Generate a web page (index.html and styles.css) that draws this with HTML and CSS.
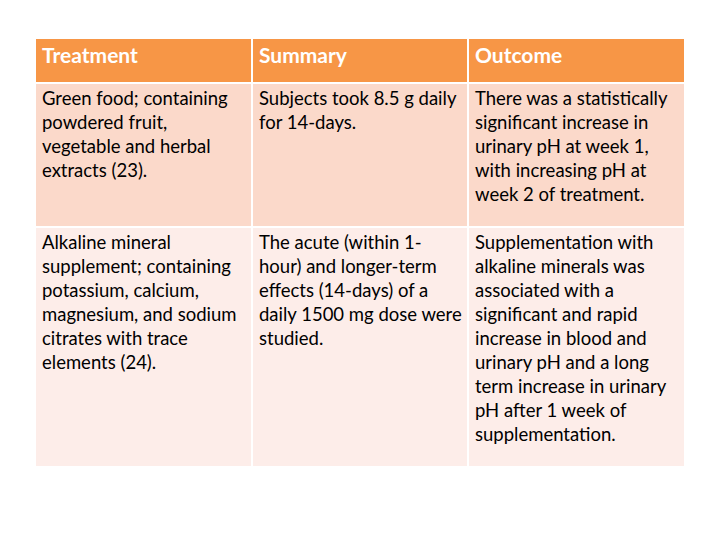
FILE: index.html
```html
<!DOCTYPE html>
<html>
<head>
<meta charset="utf-8">
<link rel="stylesheet" href="styles.css">
</head>
<body>
<div class="table">
  <div class="cell head">Treatment</div>
  <div class="cell head">Summary</div>
  <div class="cell head">Outcome</div>

  <div class="cell r1">Green food; containing<br>powdered fruit,<br>vegetable and herbal<br>extracts (23).</div>
  <div class="cell r1">Subjects took 8.5 g daily<br>for 14-days.</div>
  <div class="cell r1">There was a statistically<br>significant increase in<br>urinary pH at week 1,<br>with increasing pH at<br>week 2 of treatment.</div>

  <div class="cell r2">Alkaline mineral<br>supplement; containing<br>potassium, calcium,<br>magnesium, and sodium<br>citrates with trace<br>elements (24).</div>
  <div class="cell r2">The acute (within 1-<br>hour) and longer-term<br>effects (14-days) of a<br>daily 1500 mg dose were<br>studied.</div>
  <div class="cell r2">Supplementation with<br>alkaline minerals was<br>associated with a<br>significant and rapid<br>increase in blood and<br>urinary pH and a long<br>term increase in urinary<br>pH after 1 week of<br>supplementation.</div>
</div>
</body>
</html>
```
FILE: styles.css
```css
html, body {
  margin: 0;
  padding: 0;
  background: #ffffff;
}
body {
  width: 720px;
  height: 540px;
  font-family: Lato, "Open Sans", sans-serif;
  color: #000000;
}
.table {
  margin: 39px 0 0 36px;
  width: 648px;
  display: grid;
  grid-template-columns: 215px 214px 215px;
  grid-template-rows: 43px 142px 238px;
  gap: 2px;
}
.cell {
  padding: 2px 0 0 6px;
  font-size: 18.5px;
  line-height: 24px;
  white-space: nowrap;
  overflow: hidden;
}
.head {
  background: #f79646;
  color: #ffffff;
  font-weight: bold;
  font-size: 21px;
  padding-top: 4px;
}
.r1 {
  background: #fbd9ca;
}
.r2 {
  background: #fdede9;
}
```
